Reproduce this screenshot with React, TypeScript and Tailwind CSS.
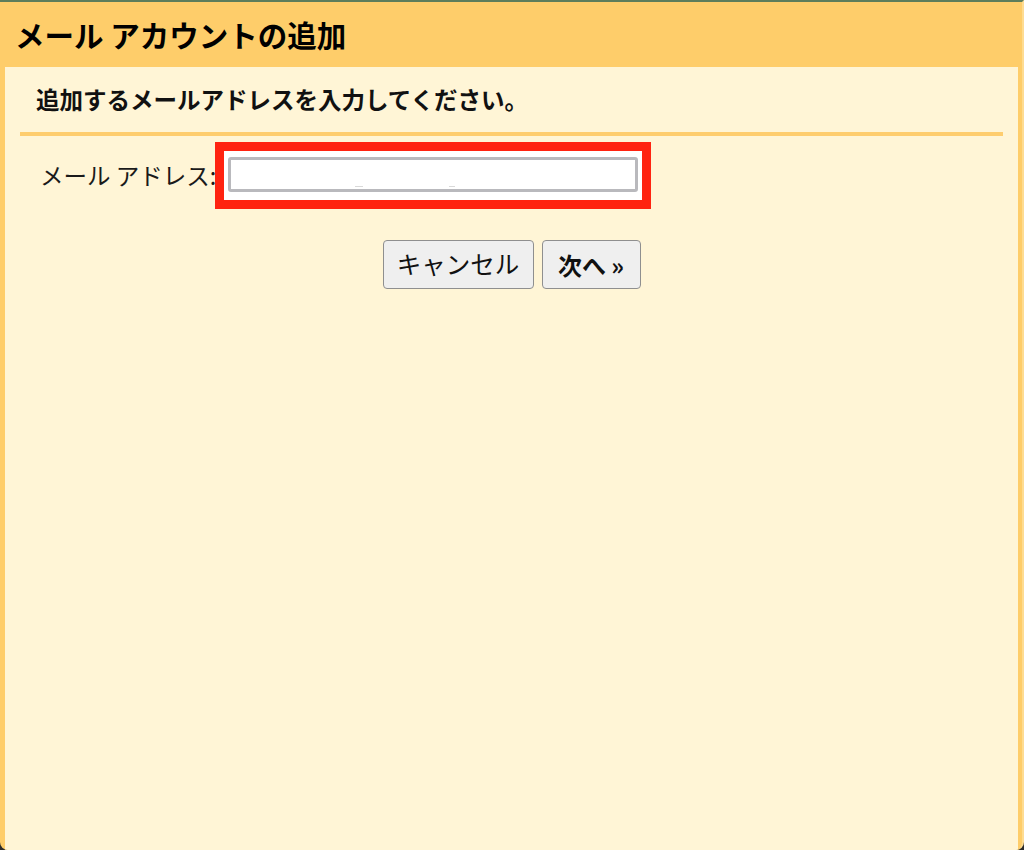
import React from "react";

export default function App() {
  const font = { fontFamily: '"Noto Sans CJK JP", "Noto Sans", sans-serif' };
  return (
    <div className="w-[1024px] h-[850px] bg-[#2b2b2b]" style={font}>
      <div className="h-full flex flex-col bg-[#fecd6a] border-t-2 border-t-[#5d7d5b] border-r-2 border-r-[#fedc92] rounded-b-[8px] overflow-hidden pl-[5px] pr-[4px]">
        <div className="h-[65px] shrink-0 flex items-center pl-[10px] pt-[1px]">
          <h1 className="text-[29.5px] font-bold text-black leading-none">メール アカウントの追加</h1>
        </div>
        <div className="flex-1 bg-[#fff5d6] px-[15px] flex flex-col">
          <div className="h-[65px] flex items-center pl-[16px]">
            <p className="text-[23.5px] font-bold text-[#111] leading-none">追加するメールアドレスを入力してください。</p>
          </div>
          <div className="h-[4px] bg-[#fecd6e]" />
          <div className="flex items-center pl-[20px] mt-[6px]">
            <div className="w-[175px] shrink-0 whitespace-nowrap text-[23.5px] text-[#1a1a1a] leading-none pt-[1px]">
              メール アドレス:
            </div>
            <div className="w-[436px] h-[67px] border-[9px] border-[#ff2310] bg-white px-[4px] pt-[6px]">
              <div className="relative h-[35px] rounded-[3px] border-[3px] border-[#b9b9bd] bg-white">
                <span className="absolute left-[124px] bottom-[2px] h-[1px] w-[8px] bg-[#d9d9d9]" />
                <span className="absolute left-[218px] bottom-[2px] h-[1px] w-[6px] bg-[#d9d9d9]" />
              </div>
            </div>
          </div>
          <div className="flex justify-center gap-[8px] mt-[31px]">
            <button className="w-[151px] h-[49px] rounded-[4px] border border-[#8f8f8f] bg-[#efefef] text-[24.5px] text-[#111] leading-none">
              キャンセル
            </button>
            <button className="w-[99px] h-[49px] rounded-[4px] border border-[#8f8f8f] bg-[#efefef] text-[24px] font-bold text-[#111] leading-none">
              次へ »
            </button>
          </div>
        </div>
      </div>
    </div>
  );
}
